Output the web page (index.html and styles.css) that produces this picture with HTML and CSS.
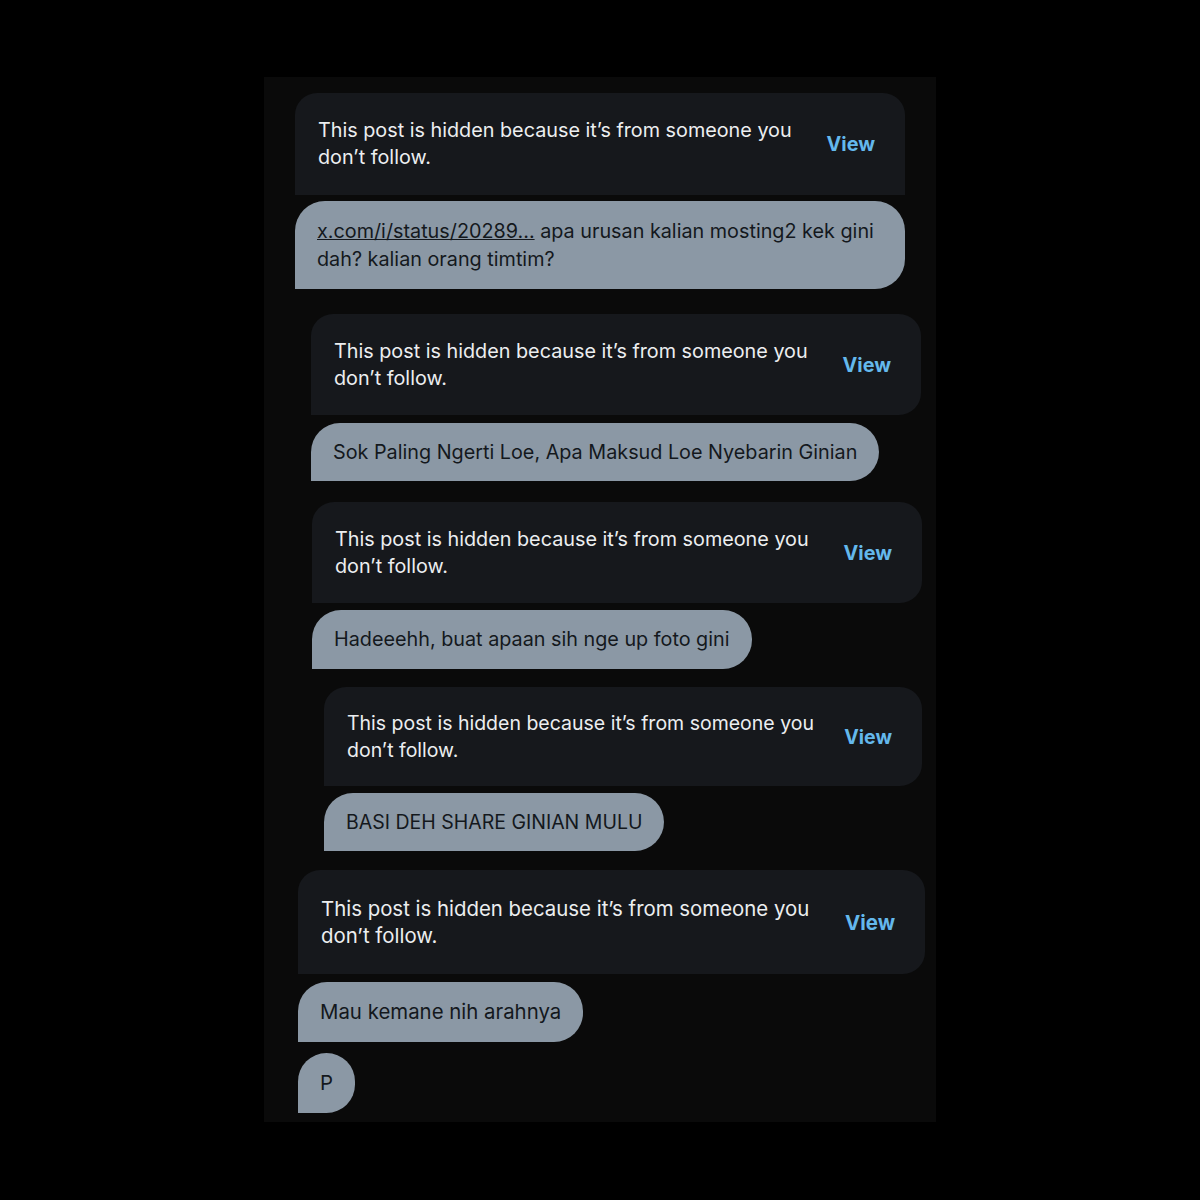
FILE: index.html
```html
<!DOCTYPE html>
<html lang="id">
<head>
<meta charset="UTF-8">
<meta name="viewport" content="width=device-width, initial-scale=1.0">
<title>Pesan</title>
<link rel="stylesheet" href="styles.css">
</head>
<body>

<div class="panel">

  <!-- tiap grup: kartu post tersembunyi + balasan -->
  <div class="group group-1">
    <div class="hidden-card flat-bottom">
      <p class="hidden-text">This post is hidden because it’s from someone you don’t follow.</p>
      <span class="view-link">View</span>
    </div>
    <div class="bubble"><span class="link">x.com/i/status/20289...</span> apa urusan kalian mosting2 kek gini dah? kalian orang timtim?</div>
  </div>

  <div class="group group-2">
    <div class="hidden-card">
      <p class="hidden-text">This post is hidden because it’s from someone you don’t follow.</p>
      <span class="view-link">View</span>
    </div>
    <div class="bubble short">Sok Paling Ngerti Loe, Apa Maksud Loe Nyebarin Ginian</div>
  </div>

  <div class="group group-3">
    <div class="hidden-card">
      <p class="hidden-text">This post is hidden because it’s from someone you don’t follow.</p>
      <span class="view-link">View</span>
    </div>
    <div class="bubble short">Hadeeehh, buat apaan sih nge up foto gini</div>
  </div>

  <div class="group group-4">
    <div class="hidden-card">
      <p class="hidden-text">This post is hidden because it’s from someone you don’t follow.</p>
      <span class="view-link">View</span>
    </div>
    <div class="bubble short">BASI DEH SHARE GINIAN MULU</div>
  </div>

  <div class="group group-5">
    <div class="hidden-card">
      <p class="hidden-text">This post is hidden because it’s from someone you don’t follow.</p>
      <span class="view-link">View</span>
    </div>
    <div class="bubble short">Mau kemane nih arahnya</div>
    <div class="bubble short single">P</div>
  </div>

</div>

</body>
</html>
```

FILE: styles.css
```css
body {
  margin: 0;
  background-color: #000;
  font-family: 'Inter', 'Liberation Sans', sans-serif;
}
.panel {
  width: 672px;
  height: 1045px;
  margin: 77px auto 0;
  padding-top: 16px;
  box-sizing: border-box;
  background-color: #0a0a0a;
  display: flex;
  flex-direction: column;
}
.group {
  display: flex;
  flex-direction: column;
  align-items: flex-start;
  font-size: 19.8px;
}
.hidden-card {
  display: flex;
  align-items: center;
  box-sizing: border-box;
  width: 100%;
  padding: 24px 30px 24px 23px;
  background-color: #16181c;
  border-radius: 22px 22px 22px 0;
  color: #eceef0;
}
.hidden-card.flat-bottom {
  border-radius: 22px 22px 0 0;
}
.hidden-text {
  flex: 1;
  margin: 0;
  line-height: 27px;
}
.view-link {
  margin-left: 30px;
  color: #64b8ec;
  font-weight: 700;
}
.bubble {
  box-sizing: border-box;
  width: 100%;
  margin-top: 6px;
  padding: 16px 22px;
  background-color: #8b98a5;
  color: #14181d;
  line-height: 28px;
  border-radius: 30px 30px 30px 0;
}
.bubble.short {
  width: auto;
  margin-top: 8px;
  padding: 15px 22px;
  border-radius: 29px 29px 29px 0;
}
.bubble.single {
  margin-top: 11px;
  padding: 16px 21px;
}
.link {
  text-decoration: underline;
}

/* posisi tiap grup */
.group-1 {
  margin-left: 31px;
  width: 610px;
}
.group-2 {
  margin-top: 25px;
  margin-left: 47px;
  width: 610px;
}
.group-2 .hidden-card,
.group-3 .hidden-card {
  padding-top: 23.5px;
  padding-bottom: 23.5px;
}
.group-3 {
  margin-top: 21px;
  margin-left: 48px;
  width: 610px;
}
.group-3 .bubble {
  margin-top: 7px;
  padding-bottom: 16px;
}
.group-4 {
  margin-top: 18px;
  margin-left: 60px;
  width: 598px;
  font-size: 19.5px;
}
.group-4 .hidden-card {
  padding-top: 22.5px;
  padding-bottom: 22.5px;
}
.group-4 .bubble {
  margin-top: 7px;
}
.group-5 {
  margin-top: 19px;
  margin-left: 34px;
  width: 627px;
  font-size: 20.4px;
}
.group-5 .hidden-card {
  padding-top: 25px;
  padding-bottom: 25px;
}
.group-5 .bubble {
  padding-top: 16px;
  padding-bottom: 16px;
}
.group-5 .bubble.single {
  margin-top: 11px;
  padding: 16px 22px;
}
```
